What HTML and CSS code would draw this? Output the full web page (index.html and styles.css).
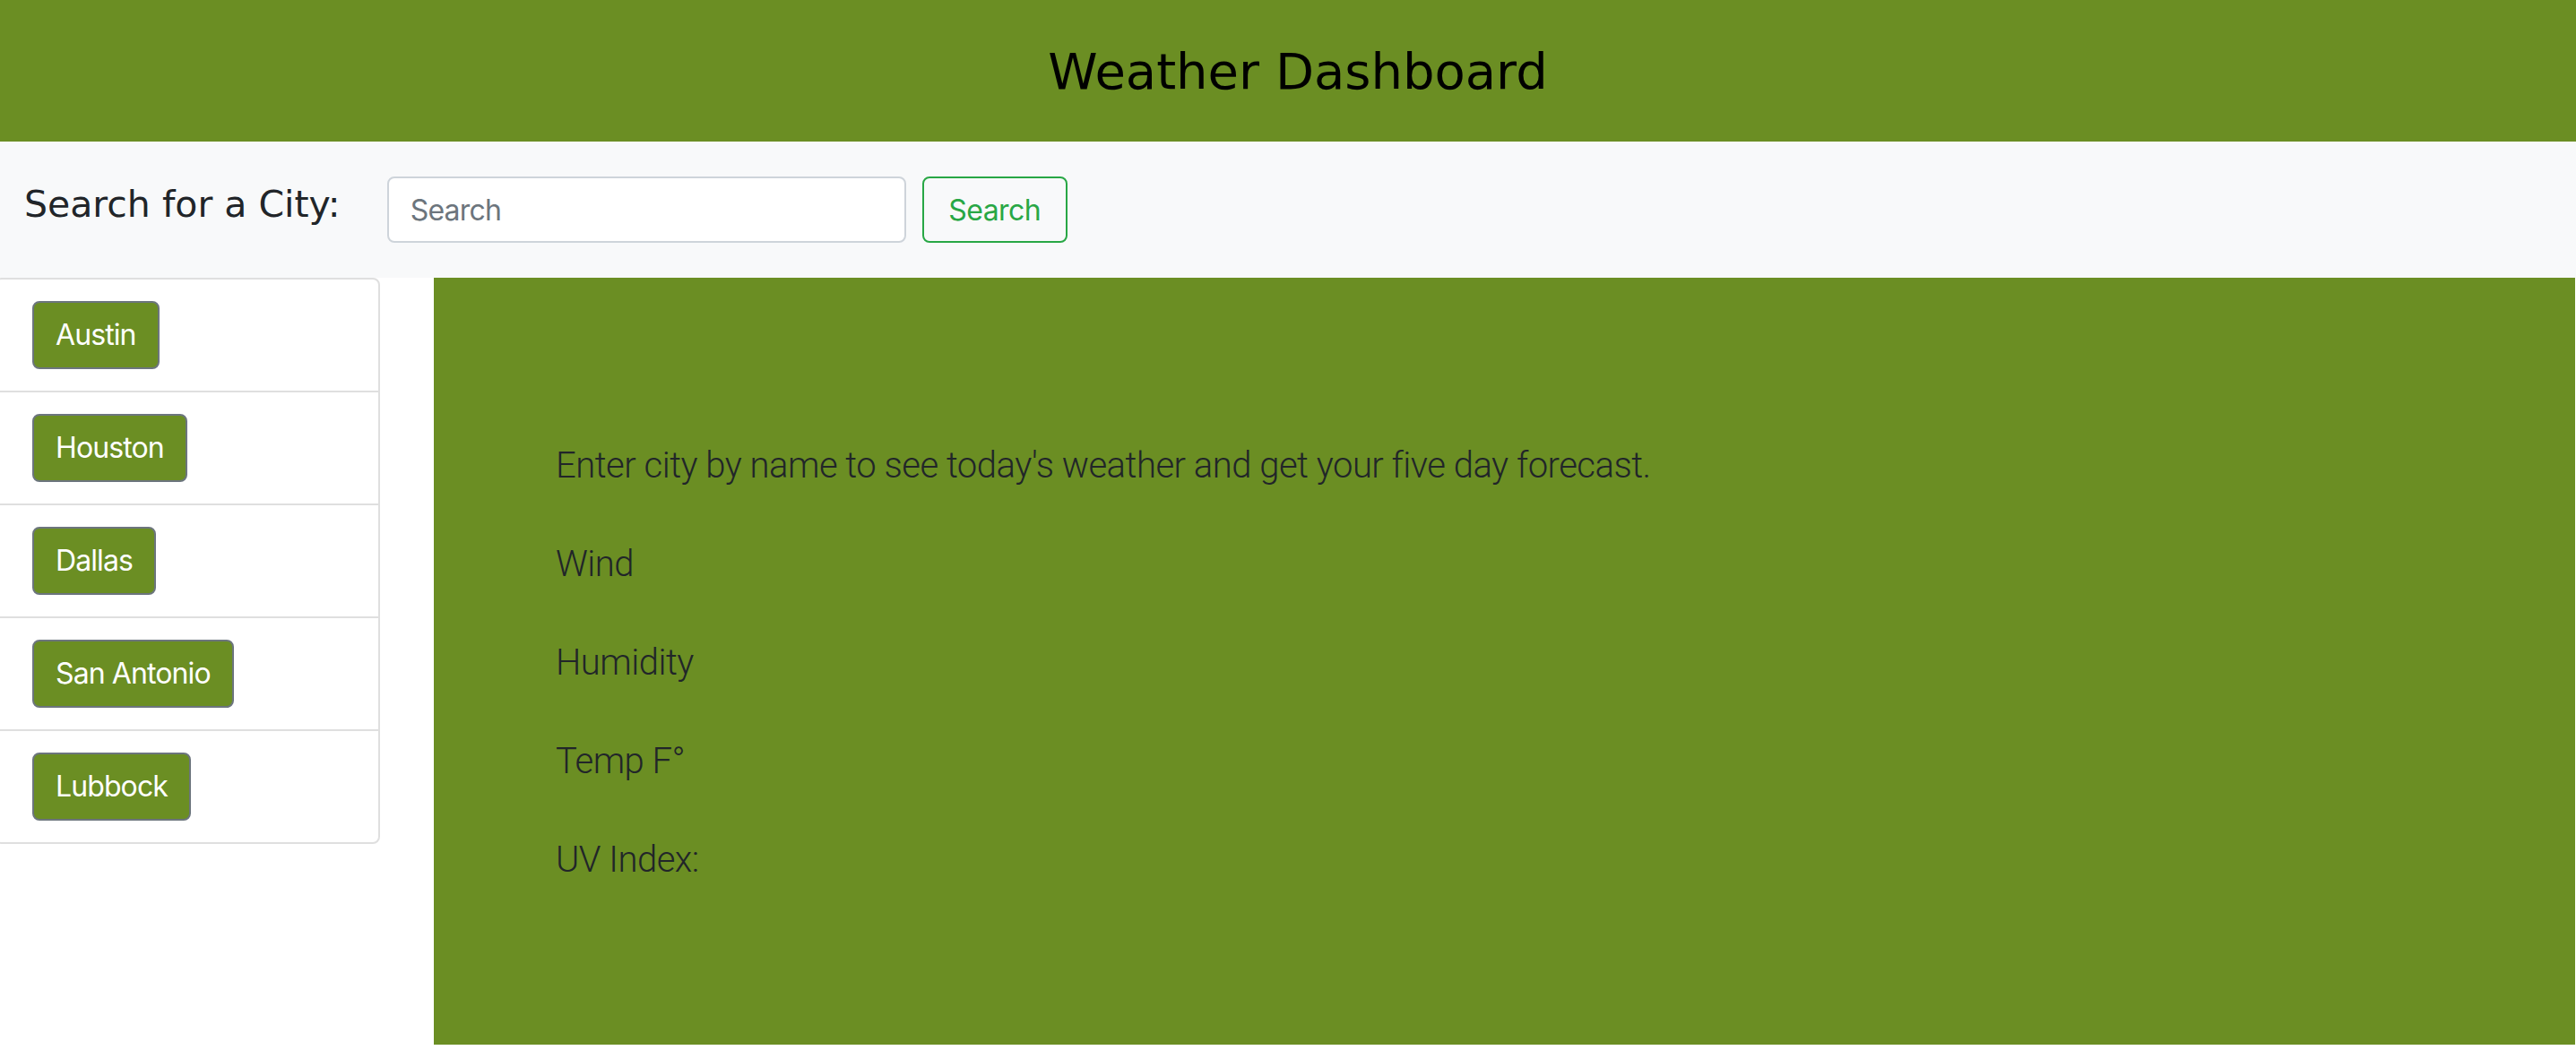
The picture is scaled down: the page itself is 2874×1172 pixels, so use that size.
FILE: index.html
```html
<!DOCTYPE html>
<html lang="en">
<head>
<meta charset="utf-8">
<title>Weather Dashboard</title>
<link rel="stylesheet" href="styles.css">
</head>
<body>
<header class="topbar">
  <h1 class="title">Weather Dashboard</h1>
</header>
<nav class="searchbar">
  <label class="search-label" for="city">Search for a City:</label>
  <input class="search-input" id="city" type="search" placeholder="Search">
  <button class="search-btn" type="button">Search</button>
</nav>
<div class="content">
  <aside class="city-card">
    <div class="city-item"><button class="city-btn" type="button">Austin</button></div>
    <div class="city-item"><button class="city-btn" type="button">Houston</button></div>
    <div class="city-item"><button class="city-btn" type="button">Dallas</button></div>
    <div class="city-item"><button class="city-btn" type="button">San Antonio</button></div>
    <div class="city-item"><button class="city-btn" type="button">Lubbock</button></div>
  </aside>
  <main class="today">
    <p class="lead">Enter city by name to see today's weather and get your five day forecast.</p>
    <p class="lead">Wind</p>
    <p class="lead">Humidity</p>
    <p class="lead">Temp F°</p>
    <p class="lead">UV Index:</p>
  </main>
</div>
</body>
</html>
```

FILE: styles.css
```css
* { box-sizing: border-box; }

html, body {
  margin: 0;
  padding: 0;
  background: #ffffff;
  overflow: hidden;
}

body {
  font-family: Inter, "Noto Sans", sans-serif;
  color: #212529;
  width: 2874px;
  height: 1172px;
}

.topbar {
  height: 158px;
  background: #6b8e23;
  display: flex;
  align-items: center;
  justify-content: center;
  padding-left: 22px;
}

.title {
  margin: 0;
  font-family: "DejaVu Sans", Verdana, sans-serif;
  font-weight: normal;
  font-size: 56px;
  line-height: 1;
  color: #000000;
  padding-top: 2px;
}

.searchbar {
  height: 152px;
  background: #f8f9fa;
  display: flex;
  align-items: center;
  padding-left: 27px;
}

.search-label {
  font-family: "DejaVu Sans", Verdana, sans-serif;
  font-size: 41px;
  color: #212529;
  margin-right: 52px;
  margin-bottom: 12px;
}

.search-input {
  width: 579px;
  height: 74px;
  border: 2px solid #ced4da;
  border-radius: 8px;
  background: #ffffff;
  padding: 0 24px;
  font-family: Inter, "Noto Sans", sans-serif;
  font-size: 32px;
  letter-spacing: -0.8px;
  color: #495057;
  outline: none;
}

.search-input::placeholder {
  color: #6c757d;
}

.search-btn {
  margin-left: 18px;
  width: 162px;
  height: 74px;
  border: 2px solid #28a745;
  border-radius: 8px;
  background: transparent;
  color: #28a745;
  font-family: Inter, "Noto Sans", sans-serif;
  font-size: 32px;
  letter-spacing: -0.6px;
  padding: 0;
}

.content {
  display: flex;
  align-items: flex-start;
}

.city-card {
  margin-left: -6px;
  width: 430px;
  border: 2px solid #dfdfdf;
  border-radius: 8px;
  background: #ffffff;
  display: flex;
  flex-direction: column;
}

.city-item {
  padding: 24px 40px;
  display: flex;
}

.city-item + .city-item {
  border-top: 2px solid #dfdfdf;
}

.city-btn {
  height: 76px;
  padding: 0 24px;
  background: #6b8e23;
  border: 2px solid #6c757d;
  border-radius: 8px;
  color: #ffffff;
  font-family: Inter, "Noto Sans", sans-serif;
  font-size: 32px;
  letter-spacing: -0.9px;
  line-height: 1;
}

.today {
  flex: 1;
  margin-left: 60px;
  margin-right: 1px;
  height: 856px;
  background: #6b8e23;
  padding: 180px 0 0 136px;
}

.lead {
  margin: 0 0 50px 0;
  font-family: Roboto, Inter, sans-serif;
  font-size: 40px;
  font-weight: 300;
  letter-spacing: -0.5px;
  line-height: 60px;
  color: #212529;
}
```
